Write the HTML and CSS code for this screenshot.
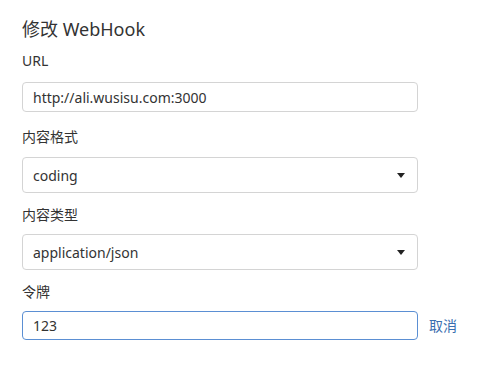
FILE: index.html
```html
<!DOCTYPE html>
<html lang="zh">
<head>
<meta charset="utf-8">
<title>修改 WebHook</title>
<link rel="stylesheet" href="styles.css">
</head>
<body>
<form class="page">
  <h3 class="title">修改 WebHook</h3>
  <label class="label label-first" for="url">URL</label>
  <input class="control control-text" id="url" type="text" value="http://ali.wusisu.com:3000">

  <label class="label label-after-input" for="format">内容格式</label>
  <div class="select-wrap">
    <select class="control control-select" id="format">
      <option>coding</option>
    </select>
    <span class="caret"></span>
  </div>

  <label class="label label-after-select" for="ctype">内容类型</label>
  <div class="select-wrap">
    <select class="control control-select" id="ctype">
      <option>application/json</option>
    </select>
    <span class="caret"></span>
  </div>

  <label class="label label-after-select" for="token">令牌</label>
  <div class="token-row">
    <input class="control control-text control-focus" id="token" type="text" value="123">
    <a class="cancel" href="#">取消</a>
  </div>
</form>
</body>
</html>
```

FILE: styles.css
```css
* { box-sizing: border-box; }
html, body { margin: 0; padding: 0; background: #fff; }
body {
  font-family: "Noto Sans", "Noto Sans CJK SC", sans-serif;
  font-size: 14px;
  color: #333;
}
.page {
  display: flex;
  flex-direction: column;
  align-items: flex-start;
  padding: 17px 0 0 22px;
  width: 481px;
}
.title {
  margin: 0;
  font-size: 18px;
  font-weight: normal;
  line-height: 24px;
  color: #333;
}
.label {
  display: block;
  line-height: 20px;
  font-size: 14px;
  color: #333;
  margin-bottom: 10px;
}
.label-first { margin-top: 10px; margin-bottom: 11px; }
.label-after-input { margin-top: 15px; }
.label-after-select { margin-top: 12px; margin-bottom: 9px; }
.control {
  display: block;
  width: 396px;
  margin: 0;
  border: 1px solid #d4d4d4;
  border-radius: 4px;
  background: #fff;
  font-family: "Noto Sans", "Noto Sans CJK SC", sans-serif;
  font-size: 14px;
  color: #333;
  padding: 0 10px;
  outline: none;
}
.control-text { height: 30px; }
.control-select {
  height: 36px;
  appearance: none;
  -webkit-appearance: none;
}
.control-focus { border-color: #5b8fd3; height: 29px; }
.select-wrap { position: relative; }
.caret {
  position: absolute;
  right: 13px;
  top: 16px;
  width: 0;
  height: 0;
  border-left: 4.5px solid transparent;
  border-right: 4.5px solid transparent;
  border-top: 5px solid #222;
  pointer-events: none;
}
.token-row {
  display: flex;
  align-items: center;
  gap: 11px;
}
.cancel {
  color: #3a6fb0;
  text-decoration: none;
  font-size: 14px;
  line-height: 20px;
}
```
